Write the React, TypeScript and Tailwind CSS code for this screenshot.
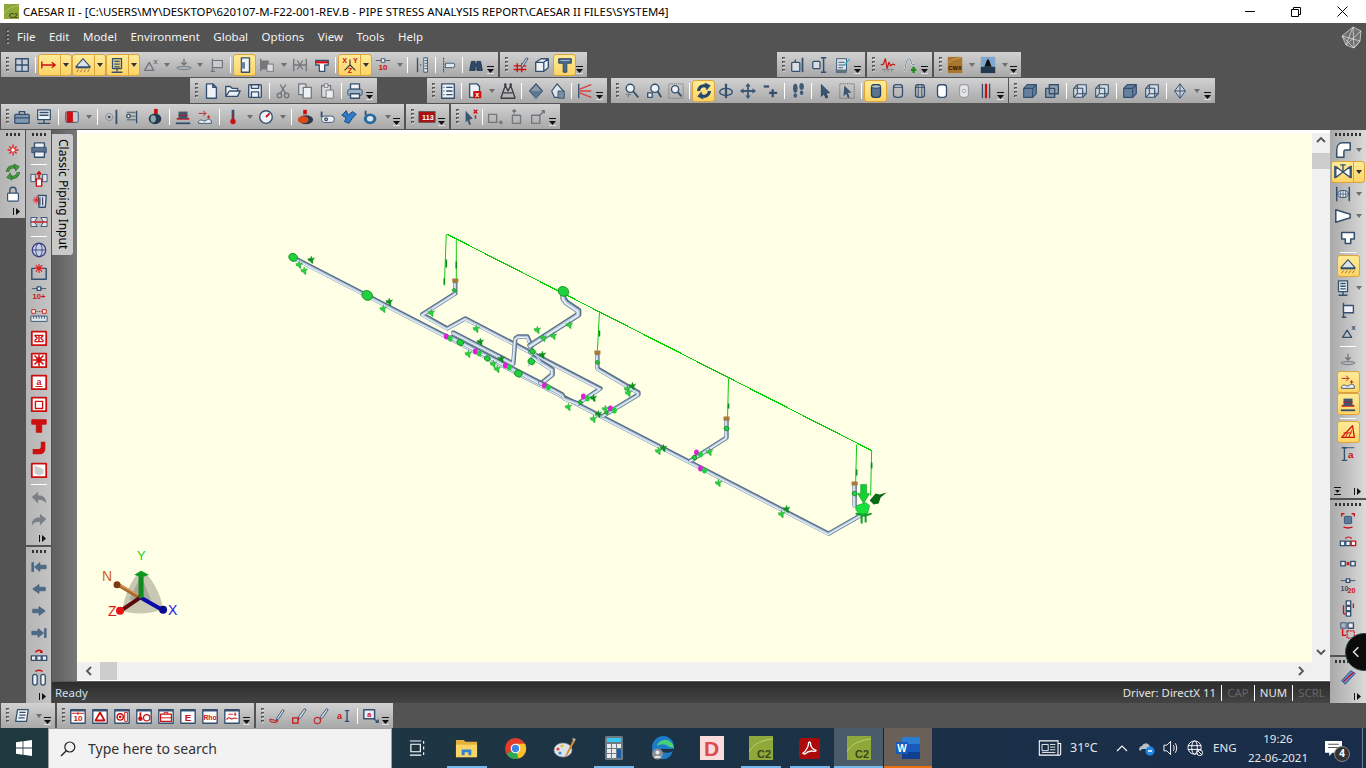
import type { ReactNode } from "react"

const D = "#34506e"
const R = "#cc1010"
const G = "#72777d"
const L = { fill: "none", stroke: D, strokeWidth: 1.5 }
const RL = { fill: "none", stroke: R, strokeWidth: 1.5 }
const GL = { fill: "none", stroke: G, strokeWidth: 1.5 }
const W = { fill: "#eef2f6", stroke: D, strokeWidth: 1.5 }
const RB = { fill: "#fff", stroke: R, strokeWidth: 2 }

const redBox = (inner: ReactNode) => (
  <>
    <rect x="2" y="3" width="16" height="15" {...RB} />
    {inner}
  </>
)
const blueBox = (inner: ReactNode) => (
  <>
    <rect x="2" y="3" width="16" height="15" fill="#fff" stroke={D} strokeWidth="1.5" />
    <path d="M2 4h16" stroke={D} strokeWidth="2" />
    {inner}
  </>
)
const label = (t: string, x: number, y: number, size: number, fill = R) => (
  <text x={x} y={y} fontSize={size} fontWeight="700" fill={fill} textAnchor="middle" fontFamily="Liberation Sans, sans-serif">
    {t}
  </text>
)
const cycle = (c: string, edge: string) => (
  <>
    <path d="M4 10a6 6 0 0 1 9-5" fill="none" stroke={edge} strokeWidth="3.4" />
    <path d="M16 10a6 6 0 0 1-9 5" fill="none" stroke={edge} strokeWidth="3.4" />
    <path d="M4 10a6 6 0 0 1 9-5" fill="none" stroke={c} strokeWidth="2.2" />
    <path d="M16 10a6 6 0 0 1-9 5" fill="none" stroke={c} strokeWidth="2.2" />
    <path d="M11 1l6 3-4 5z" fill={c} stroke={edge} strokeWidth=".6" />
    <path d="M9 19l-6-3 4-5z" fill={c} stroke={edge} strokeWidth=".6" />
  </>
)

const ICONS: Record<string, ReactNode> = {
  grid: <><rect x="3" y="3" width="14" height="14" fill="#c5cdd6" stroke={D} strokeWidth="1.5" /><path d="M10 3v14M3 10h14" {...L} /></>,
  beam: <path d="M2 6v8M2 10h15M13 7l4 3-4 3" {...RL} />,
  support: <><path d="M10 3l8 9H2z" fill="#dde3e8" stroke={D} strokeWidth="1.2" /><path d="M2 13h16" stroke={D} strokeWidth="1.5" /><path d="M3 18l2-3M7 18l2-3M11 18l2-3M15 18l2-3" stroke="#a06020" /></>,
  hanger: <><rect x="5" y="3" width="10" height="11" fill="#e4cf80" stroke={D} strokeWidth="1.4" /><path d="M7 6h6M7 9h6M7 12h6M10 14v3M4 18h12" {...L} /></>,
  dx: <><path d="M3 16l5-9 5 9z" {...GL} />{label("x", 15, 9, 9, G)}</>,
  nozzle: <><path d="M2 13c3-2 13-2 16 0-3 3-13 3-16 0z" fill="#aeb6bd" stroke={G} /><path d="M10 3v7M7 7l3 3 3-3" {...GL} /></>,
  flag: <><path d="M5 3v14M3 17h5" {...GL} /><rect x="5" y="5" width="11" height="8" fill="#c8ccd0" stroke={G} strokeWidth="1.3" /></>,
  node: <><rect x="6" y="2" width="9" height="16" fill="#eef2f6" stroke={D} strokeWidth="1.5" /><rect x="6" y="7" width="4" height="7" fill="#5f7fa6" /></>,
  flagdoc: <><path d="M3 3v14" {...GL} /><rect x="3" y="5" width="9" height="10" fill="#777" /><rect x="10" y="9" width="7" height="8" fill="#ddd" stroke={G} /></>,
  exp: <><path d="M3 3v14M17 3v14M3 10h14" {...GL} /><path d="M7 5l3 5-3 5M13 5l-3 5 3 5" {...GL} /></>,
  tee: <><path d="M3 5h14v5h-4v7H7v-7H3z" fill="#fff" stroke={D} strokeWidth="1.4" /><path d="M3 7h14" stroke={R} strokeWidth="2.5" /></>,
  xyz: <><path d="M10 10V4M10 10l-6 6M10 10l6 6" fill="none" stroke="#333" strokeWidth="1.2" />{label("X", 4, 8, 8)}{label("Y", 16, 8, 8)}{label("Z", 10, 19, 8)}</>,
  ten: <><path d="M2 5h16" stroke="#555" /><rect x="8" y="3" width="4" height="4" fill="#eef2f6" stroke={D} />{label("10", 10, 16, 9)}</>,
  rod: <><path d="M5 2v16M15 2v16" {...L} /><rect x="12" y="2" width="4" height="16" fill="#eef2f6" stroke={D} /><path d="M13 5h3M13 8h3M13 11h3M13 14h3" stroke={D} /><path d="M8 10h1" {...L} /></>,
  dash: <><path d="M4 2v16" stroke={D} strokeWidth="1.3" strokeDasharray="2 1" /><path d="M6 8h8a2 2 0 0 1 0 5H6z" fill="#dfe6ec" stroke={D} /></>,
  binoc: <path d="M3 16l2-10h4v3h2V6h4l2 10h-6v-4H9v4z" fill="#2e4a68" stroke="#1e3550" />,
  hash: <><path d="M3 11h14M3 15h14M7 8v10M12 8v10" {...RL} /><path d="M11 11l6-9 2 1-6 9z" fill="#cfd6dc" stroke={D} /></>,
  box: <path d="M3 7l6-4h8v10l-5 4H3zM3 7h9v10M12 7l5-4" fill="#eef2f6" stroke={D} strokeWidth="1.5" />,
  hammer: <><path d="M3 3h14v5h-5v10H8V8H3z" fill="#4d6d8e" stroke="#24415e" /><path d="M5 5h10" stroke="#a8c0d8" /></>,
  doc: <path d="M5 2h7l4 4v12H5zM12 2v4h4" {...W} />,
  open: <path d="M2 16V5h5l2 2h6v3H6l-4 6h13l3-6H6" {...W} />,
  save: <><rect x="3" y="3" width="14" height="14" rx="1" {...W} /><path d="M6 3v4h8V3M6 17v-6h8v6" {...L} /></>,
  cut: <><circle cx="6" cy="15" r="2.5" {...GL} /><circle cx="14" cy="15" r="2.5" {...GL} /><path d="M7 13l6-10M13 13L7 3" {...GL} /></>,
  copy: <><path d="M3 2h8v12H3z" fill="#dde3e8" stroke={G} strokeWidth="1.4" /><path d="M8 6h9v12H8z" fill="#eef2f6" stroke={G} strokeWidth="1.4" /></>,
  paste: <><rect x="4" y="4" width="10" height="13" fill="#d8dcdf" stroke={G} strokeWidth="1.4" /><rect x="7" y="2" width="4" height="4" fill="#eee" stroke={G} /><rect x="9" y="9" width="8" height="9" fill="#eee" stroke={G} /></>,
  print: <><rect x="5" y="2" width="10" height="6" {...W} /><rect x="2" y="8" width="16" height="7" rx="2" fill="#9fb3c6" stroke={D} /><rect x="5" y="13" width="10" height="5" {...W} /></>,
  list: <><rect x="3" y="2" width="14" height="16" {...W} /><path d="M8 6h7M8 10h7M8 14h7M5 6h1M5 10h1M5 14h1" {...L} /></>,
  docx: <><path d="M4 2h8l3 3v12H4z" {...W} /><rect x="8" y="10" width="9" height="8" rx="1" fill={R} />{label("x", 12.5, 17, 8, "#fff")}</>,
  walk: <><path d="M2 18L7 4l3 6 3-6 5 14M5 12h10M2 18h16" fill="none" stroke="#3a3f46" strokeWidth="1.5" /><circle cx="7" cy="3" r="1.5" fill="#3a3f46" /><circle cx="13" cy="3" r="1.5" fill="#3a3f46" /></>,
  bucket: <><path d="M10 2l7 8-7 8-7-8z" fill="#8e9aa6" stroke={D} strokeWidth="1.3" /><path d="M3 10h14l-7 8z" fill="#5f7793" /></>,
  bucket2: <><path d="M9 2l7 8-3 7H6l-3-7z" fill="#dfe6ec" stroke={D} strokeWidth="1.3" /><rect x="10" y="10" width="7" height="8" fill="#7a8fa6" stroke={D} /></>,
  redlines: <><path d="M3 2v16" stroke={D} strokeWidth="1.5" /><path d="M4 8l13-5M4 10h13M4 12l13 5" stroke="#d94040" strokeWidth="1.6" /></>,
  zoom1: <><circle cx="8" cy="7" r="4.5" {...W} /><path d="M11 10l6 7" stroke={D} strokeWidth="2" /><path d="M3 14h6M6 11v6" stroke={G} /></>,
  zoom2: <><circle cx="11" cy="7" r="4.5" {...W} /><path d="M14 10l4 7" stroke={D} strokeWidth="2" /><rect x="3" y="12" width="5" height="5" {...W} /></>,
  zoom3: <><rect x="2" y="2" width="16" height="16" fill="none" stroke="#666" strokeDasharray="1 1" /><circle cx="9" cy="8" r="4" {...W} /><path d="M12 11l4 5" stroke={D} strokeWidth="2" /></>,
  rotate: cycle("#24476c", "#24476c"),
  orbit: <><path d="M10 2v16" stroke={D} strokeWidth="2.5" /><ellipse cx="10" cy="11" rx="7" ry="4" {...L} /></>,
  move: <path d="M10 1l3 4h-2v4h4V7l4 3-4 3v-2h-4v4h2l-3 4-3-4h2v-4H5v2l-4-3 4-3v2h4V5H7z" fill="#3b5877" />,
  fit: <><path d="M3 5h6" stroke={D} strokeWidth="2.5" /><path d="M13 8v9M9 12h9" stroke={D} strokeWidth="2.5" /></>,
  steps: <><ellipse cx="7" cy="7" rx="2.5" ry="5" fill="#3f5a78" /><ellipse cx="14" cy="5" rx="2.5" ry="4" fill="#3f5a78" /><ellipse cx="7" cy="15" rx="2" ry="2.5" fill="#3f5a78" /><ellipse cx="14" cy="12" rx="2" ry="2.5" fill="#3f5a78" /></>,
  arrow: <path d="M6 3l9 9-4 0 2 5-2 1-2-5-3 3z" fill="#3b5672" stroke="#28415c" />,
  arrowbox: <><rect x="2" y="2" width="16" height="16" fill="none" stroke="#555" strokeDasharray="1 1" /><path d="M7 4l8 8-4 0 2 5-2 1-2-5-3 3z" fill="#3b5672" /></>,
  cyl: <><rect x="5" y="3" width="10" height="14" rx="3" fill="#5a7590" stroke="#24415e" strokeWidth="1.5" /><ellipse cx="10" cy="5" rx="5" ry="2" fill="#aebdca" stroke="#24415e" /></>,
  cylw: <><rect x="5" y="3" width="10" height="14" rx="3" fill="none" stroke={D} strokeWidth="1.4" /><path d="M5 6h10" stroke={D} /></>,
  cylh: <><rect x="5" y="3" width="10" height="14" rx="3" fill="none" stroke={D} strokeWidth="1.4" /><path d="M8 3v14M12 3v14M5 6h10" stroke={D} /></>,
  cylf: <><rect x="5" y="3" width="10" height="14" rx="3" fill="#fff" stroke={D} strokeWidth="1.5" /></>,
  cylg: <><rect x="5" y="3" width="10" height="14" rx="3" fill="#e4e6e8" stroke="#9aa0a6" strokeWidth="1.4" /><circle cx="10" cy="10" r="2" fill="none" stroke="#aaa" /></>,
  cylr: <><path d="M6 2v16M14 2v16" stroke={D} strokeWidth="1.5" /><path d="M10 2v16" stroke="#cc1010" strokeWidth="2.5" /></>,
  cube1: <path d="M3 7h10v10H3zM3 7l4-4h10v10l-4 4M13 7l4-4" fill="#66819e" stroke={D} strokeWidth="1.3" />,
  cube2: <path d="M3 7h10v10H3zM7 3h10v10H7z" fill="#66819e" fillOpacity=".5" stroke={D} strokeWidth="1.5" />,
  cube3: <path d="M3 7h10v10H3zM3 7l4-4h10v10l-4 4M7 3v10h10M7 13l-4 4" fill="#d5dce3" stroke={D} strokeWidth="1.2" />,
  gem: <path d="M10 2l6 8-6 8-6-8zM4 10h12M10 2v16" fill="#cdd5dc" stroke={D} strokeWidth="1.1" />,
  brief: <><rect x="2" y="7" width="16" height="10" rx="1" fill="#7f98b0" stroke={D} strokeWidth="1.4" /><path d="M7 7V4h6v3M2 11h16" {...L} /></>,
  note: <><rect x="3" y="2" width="14" height="11" fill="#eef2f6" stroke={D} strokeWidth="1.4" /><path d="M5 5h10M5 8h10M3 17h14M10 13v4" {...L} /></>,
  redcyl: <><rect x="3" y="4" width="14" height="12" rx="2" fill="#c5ccd3" stroke={D} /><rect x="4" y="4" width="7" height="12" fill={R} /></>,
  target: <><path d="M16 2v16" stroke={D} strokeWidth="2" /><circle cx="8" cy="10" r="4" fill="none" stroke="#777" strokeDasharray="2 1" /><circle cx="8" cy="10" r="1.5" fill={D} /></>,
  spec: <><path d="M3 5h10M3 9h10M3 13h10" {...GL} /><path d="M14 3v14" {...L} /><circle cx="5" cy="9" r="2" {...W} /></>,
  tire: <><rect x="9" y="1" width="4" height="6" fill={R} /><ellipse cx="10" cy="12" rx="7" ry="6" fill="#24384e" /><ellipse cx="8" cy="12" rx="3" ry="4" fill="#8aa" /></>,
  redbeam: <><path d="M3 12h14" stroke={R} strokeWidth="2" /><path d="M5 4h10v8H5z" fill="#3e5872" /><path d="M5 8h10" stroke={R} /><path d="M2 17h16" stroke={D} strokeWidth="2" /></>,
  wave: <><path d="M3 15c3-4 5 1 8-1s3-2 6 0v3H3z" fill="#eef2f6" stroke={D} /><path d="M3 6h8M8 3l3 3-3 3M14 8v4M12 10h4" stroke="#b02020" fill="none" /></>,
  therm: <><path d="M10 2v11" stroke={D} strokeWidth="3" /><circle cx="10" cy="15" r="3" fill={R} /><path d="M10 6v8" stroke={R} /></>,
  gauge: <><circle cx="10" cy="10" r="7" fill="#eef2f6" stroke={D} strokeWidth="1.5" /><path d="M10 10l4-4" stroke={R} strokeWidth="2" /></>,
  fire: <><ellipse cx="11" cy="13" rx="8" ry="5" fill="#2b3b4c" /><ellipse cx="8" cy="13" rx="6" ry="4" fill="#d94a1a" /><path d="M8 2h4v5H8z" fill={R} /></>,
  pipes: <><rect x="4" y="9" width="14" height="7" rx="3" fill="#eef2f6" stroke={D} /><circle cx="9" cy="12.5" r="1.5" {...L} /><path d="M4 4v6" stroke={D} strokeWidth="2" /></>,
  flash: <path d="M2 8l5-5 2 5 5-4 4 3-4 4-4 6-5-2 2-4z" fill="#2a7fd0" stroke="#1a3f6a" />,
  ring: <><ellipse cx="9" cy="12" rx="7" ry="6" fill="#2b6a9a" /><ellipse cx="9" cy="12" rx="3.5" ry="3" fill="#d8e4ee" /><path d="M4 3v5" stroke={D} strokeWidth="2" /></>,
  r113: <><rect x="1" y="4" width="18" height="12" fill="#b00e0e" stroke="#555" />{label("113", 11, 13, 8, "#fff")}</>,
  cursorx: <><path d="M4 3l8 9-4 1 2 5-2 1-2-5-2 2z" fill="#3b5672" /><path d="M13 2l4 4M17 2l-4 4M15 8v4" stroke={R} strokeWidth="1.5" /></>,
  ang1: <><path d="M4 7h9v9H4z" {...GL} /><path d="M15 16h4M17 14l2 2-2 2" {...GL} /></>,
  ang2: <><path d="M6 8h9v9H6z" {...GL} /><path d="M8 2v4M6 4l2-2 2 2" {...GL} /></>,
  ang3: <><path d="M3 8h9v9H3z" {...GL} /><path d="M12 8l5-5M14 3h3v3" {...GL} /></>,
  cwx: <><rect x="2" y="1" width="16" height="18" fill="#a8762c" /><path d="M3 8c4-5 8-5 14-6" stroke="#d6a860" fill="none" />{label("CWX", 10, 16, 6.5, "#1a1208")}</>,
  pump: <><rect x="2" y="1" width="16" height="18" fill="#7fa8d0" /><path d="M9 4h2l3 8H6z" fill="#111" /><rect x="2" y="12" width="16" height="7" fill="#22384e" /></>,
  cylrod: <><rect x="3" y="7" width="9" height="10" rx="1" fill="#d8dfe6" stroke={D} strokeWidth="1.4" /><path d="M15 2v16" stroke={D} strokeWidth="2" /><path d="M7 4v3" {...L} /></>,
  cylrod2: <><rect x="2" y="6" width="8" height="8" rx="1" fill="#d8dfe6" stroke={D} strokeWidth="1.4" /><path d="M14 2v16M11 2h6M11 18h6" stroke={D} strokeWidth="1.7" /></>,
  noteedit: <><path d="M4 3h11v14H4z" fill="#dde3e8" stroke={D} /><path d="M6 7h7M6 10h7M6 13h5" stroke={D} /><path d="M3 15h12v4H3z" fill="#62717f" /><path d="M12 10l6-7 1 1-6 7z" fill="#24b5c8" /></>,
  spectrum: <><path d="M2 10l3-1 2-6 2 11 2-7 2 4 2-2 3 1" fill="none" stroke={R} strokeWidth="1.3" /><path d="M3 15h14M6 14v4M10 14v4M14 14v4" stroke="#888" /></>,
  squig: <><path d="M3 17c3-1 1-13 6-14 4 0 0 9 7 6" fill="none" stroke="#eef2f6" strokeWidth="2" /><path d="M3 17c3-1 1-13 6-14 4 0 0 9 7 6" fill="none" stroke={D} strokeWidth=".8" /><path d="M14 12v7M11 15.5h6" stroke="#1c8a1c" strokeWidth="2.5" /></>,
  // vertical bars
  burst: <><path d="M10 4v12M4 10h12M6 6l8 8M14 6l-8 8" stroke="#e02020" strokeWidth="1.5" /><circle cx="10" cy="10" r="2" fill="#fff" /></>,
  refresh: cycle("#3f9a3f", "#1c5a1c"),
  lock: <><rect x="4" y="9" width="12" height="9" rx="1" fill="#fff" stroke={D} strokeWidth="1.3" /><path d="M6.5 9V6a3.5 3.5 0 0 1 7 0v3" fill="none" stroke={D} strokeWidth="1.5" /></>,
  docs: <><rect x="5" y="2" width="11" height="7" {...W} /><rect x="2" y="7" width="16" height="6" fill="#5b7590" stroke={D} /><rect x="5" y="12" width="11" height="6" {...W} /></>,
  valveUp: <><rect x="1" y="6" width="5" height="8" fill="#dfe6ec" stroke={D} /><rect x="14" y="6" width="5" height="8" fill="#dfe6ec" stroke={D} /><rect x="7" y="11" width="6" height="8" fill="#fff" stroke={R} strokeWidth="1.5" /><path d="M10 10V4M7.5 6L10 3l2.5 3" stroke={R} strokeWidth="1.7" fill="none" /></>,
  trash: <><path d="M9 5h9l-1 13h-7z" {...W} /><path d="M11 7v9M14 7v9" {...L} /><path d="M7 6v8M3 10h8M4 7l6 6M10 7l-6 6" stroke="#e02020" /></>,
  split: <><path d="M1 5h7l-3 5 3 5H1z" fill="#dfe6ec" stroke={D} /><path d="M19 5h-7l3 5-3 5h7z" fill="#dfe6ec" stroke={D} /><path d="M1 10h18" stroke={R} strokeWidth="1.5" /></>,
  globe: <><circle cx="10" cy="10" r="7.5" fill="#c5cfe0" stroke="#3c3f86" strokeWidth="1.4" /><ellipse cx="10" cy="10" rx="3.5" ry="7.5" fill="none" stroke="#3c3f86" /><path d="M2.5 10h15" stroke="#3c3f86" /></>,
  boxburst: <><rect x="2" y="6" width="16" height="12" fill="none" stroke={D} strokeWidth="1.6" /><path d="M10 1v10M5 6h10M6.5 2.5l7 7M13.5 2.5l-7 7" stroke="#e02020" strokeWidth="1.3" /></>,
  tenplus: <><path d="M2 4h16" stroke={D} /><rect x="8" y="2" width="4" height="4" {...W} />{label("10+", 10, 15, 8.5)}</>,
  ruler: <><rect x="2" y="3" width="4" height="4" fill="#fff" stroke={R} /><rect x="14" y="3" width="4" height="4" fill="#fff" stroke={R} /><path d="M6 5h8" stroke={R} strokeDasharray="1 1" /><rect x="1" y="10" width="18" height="6" fill="#dfe6ec" stroke={D} /><path d="M4 10v3M7 10v3M10 10v3M13 10v3M16 10v3" stroke={D} /></>,
  restr: redBox(<path d="M5 7h10M10 7v7M5 14h10M5 7l3 3-3 3M15 7l-3 3 3 3" stroke={R} strokeWidth="1.5" fill="none" />),
  disp: redBox(<><path d="M10 4v13M3 10h14M5 5l10 10M15 5L5 15" stroke={R} strokeWidth="1.7" /><circle cx="10" cy="10" r="3" fill={R} /></>),
  alpha: redBox(<>{label("a", 10, 13, 10)}<path d="M6 15h8" stroke={R} /></>),
  forceB: redBox(<rect x="6" y="7" width="8" height="8" fill="none" stroke={R} strokeWidth="1.5" />),
  redTee: <path d="M2 3h16v5h-5v9H7V8H2z" fill={R} stroke={R} />,
  redElbow: <path d="M12 3h5v8a6 6 0 0 1-6 6H3v-6h7a2 2 0 0 0 2-2z" fill={R} />,
  redRed: redBox(<path d="M5 5l10 4v5l-5 2-5-2z" fill="#ccc" />),
  undo: <path d="M2 9l7-6v4c6 0 9 3 9 9-2-3-5-4-9-4v4z" fill="#7b8086" />,
  redo: <path d="M18 9l-7-6v4c-6 0-9 3-9 9 2-3 5-4 9-4v4z" fill="#7b8086" />,
  first: <path d="M2 5v10h2V5zM5 10l6-5v3h7v4h-7v3z" fill="#4c6a8a" stroke={D} strokeWidth=".6" />,
  prev: <path d="M3 10l7-5v3h7v4h-7v3z" fill="#4c6a8a" stroke={D} strokeWidth=".6" />,
  next: <path d="M17 10l-7-5v3H3v4h7v3z" fill="#4c6a8a" stroke={D} strokeWidth=".6" />,
  last: <path d="M18 5v10h-2V5zM15 10L9 5v3H2v4h7v3z" fill="#4c6a8a" stroke={D} strokeWidth=".6" />,
  threeBox: <><rect x="1.5" y="11" width="5" height="5" {...W} /><rect x="7.5" y="11" width="5" height="5" {...W} /><rect x="13.5" y="11" width="5" height="5" {...W} /><path d="M6 7c2-3 6-3 8 0M14 7l-3 0" {...RL} /></>,
  twoCyl: <><rect x="3" y="7" width="5" height="12" rx="2.5" {...W} /><rect x="12" y="7" width="5" height="12" rx="2.5" {...W} /><path d="M6 4c2-2 6-2 8 0" {...RL} /></>,
  elbow: <path d="M9 2h9v8h-5c-1 0-2 1-2 2v6H3v-7c0-5 2-9 6-9z" fill="#fff" stroke={D} strokeWidth="1.7" />,
  valve: <><path d="M1 3v14M19 3v14" stroke={D} strokeWidth="1.7" /><path d="M2 4l8 6-8 6zM18 4l-8 6 8 6z" fill="#fff" stroke={D} strokeWidth="1.5" /><path d="M10 2v8M7 2h6" stroke={D} strokeWidth="1.5" /></>,
  expj: <><path d="M3 2v16M17 2v16" stroke={D} strokeWidth="1.7" /><ellipse cx="10" cy="10" rx="6" ry="4" fill="#e4eaf0" stroke={D} /><path d="M7 6v8M10 6v8M13 6v8M3 10h14" stroke={D} strokeWidth=".8" /></>,
  reducer: <path d="M2 3l16 5v4L2 17z" fill="#fff" stroke={D} strokeWidth="1.7" />,
  teeW: <path d="M3 4h14v7h-4v5H7v-5H3z" fill="#fff" stroke={D} strokeWidth="1.7" />,
  hangerW: <><rect x="5" y="2" width="10" height="12" {...W} /><path d="M7 5h6M7 8h6M7 11h6M10 14v4M5 18h10" {...L} /></>,
  flagW: <><path d="M5 2v16M3 18h5" {...L} /><rect x="5" y="5" width="11" height="8" {...W} /></>,
  dxW: <><path d="M4 16l5-8 5 8z" {...L} />{label("x", 16, 8, 9, D)}</>,
  aText: <><path d="M3 3h6M3 17h6M6 3v14" {...L} />{label("a", 13, 14, 11)}<path d="M9 3h8" stroke={D} /></>,
  lineSlant: <><path d="M3 16h14L15 3z" fill="none" stroke={R} strokeWidth="1.4" /><path d="M7 16l3-5M11 16l3-8M5 11h9" stroke={R} /></>,
  rotateNode: <><rect x="6" y="6" width="8" height="8" rx="1" fill="#5b7a9a" stroke={D} /><path d="M3 6V3h3M17 6V3h-3M5 18c3 1 7 1 10 0" {...RL} /></>,
  nodesRed: <><rect x="1.5" y="9" width="5" height="5" {...W} /><rect x="7.5" y="9" width="5" height="5" {...W} /><rect x="13.5" y="9" width="5" height="5" fill="#fff" stroke={R} strokeWidth="1.5" /><path d="M7 6c2-2 5-2 7 0" {...RL} /></>,
  nodesX: <><rect x="2" y="7" width="5" height="5" {...W} /><rect x="13" y="7" width="5" height="5" {...W} /><path d="M8.5 8l3 3M11.5 8l-3 3" {...RL} /></>,
  t1020: <><path d="M2 4h16" stroke={D} /><rect x="8" y="2" width="4" height="4" {...W} />{label("10", 6, 15, 8, D)}{label("20", 14, 18, 8)}</>,
  stack: <><rect x="8" y="2" width="5" height="5" {...W} /><rect x="8" y="8" width="5" height="5" {...W} /><rect x="8" y="14" width="5" height="5" {...W} /><path d="M5 7v9l2 1M16 5v5" {...RL} /></>,
  dashbox: <><rect x="2" y="2" width="6" height="6" fill="#a8b8ca" stroke={D} /><rect x="10" y="2" width="6" height="6" {...W} /><rect x="9" y="11" width="8" height="8" fill="none" stroke={R} strokeDasharray="2 1" strokeWidth="1.3" /><path d="M4 9v7h4" {...RL} /></>,
  cylblue: <><path d="M3 14L13 3l5 3L7 18z" fill="#5f8fd8" stroke="#274a80" /><path d="M5 15L16 5" stroke={R} strokeWidth="1.3" /></>,
  // bottom bar
  scroll: <><path d="M5 3h12l-2 13H3z" fill="#eef2f6" stroke={D} strokeWidth="1.4" /><path d="M7 6h7M7 9h7M6 12h7" {...L} /></>,
  bx10: blueBox(<>{label("10", 10, 15, 9)}<path d="M3 7h14M10 5v4" stroke={R} /></>),
  bxTri: blueBox(<path d="M5 15l5-9 5 9z" fill="none" stroke={R} strokeWidth="2" />),
  bxTarget: blueBox(<><circle cx="8" cy="11" r="3.5" fill="none" stroke={R} strokeWidth="1.5" /><circle cx="8" cy="11" r="1.5" fill={R} /><rect x="13" y="6" width="3" height="10" fill="none" stroke={R} /></>),
  bxTherm: blueBox(<><path d="M6 6v6" stroke={R} strokeWidth="2" /><circle cx="6" cy="13" r="2.5" fill={R} /><circle cx="13" cy="12" r="3.5" fill="none" stroke={R} strokeWidth="1.3" /></>),
  bxBrief: blueBox(<><rect x="4" y="8" width="12" height="8" fill="none" stroke={R} strokeWidth="1.3" /><path d="M8 8V6h4v2M4 12h12" stroke={R} fill="none" /></>),
  bxE: blueBox(label("E", 10, 15, 11)),
  bxRho: blueBox(label("Rho", 10, 14, 7.5)),
  bxWave: blueBox(<><path d="M4 14c3-5 5 1 7-1s3 0 5 0" {...RL} strokeWidth="1.2" /><path d="M6 8h5M12 8h3M13.5 6v4" stroke={R} /></>),
  pen1: <><path d="M10 12L16 3l2 1-6 9-3 2z" fill="#d8dfe6" stroke={D} /><path d="M2 14c0 4 8 4 9 1-3 1-6-2-9-1z" fill="none" stroke="#c23030" strokeWidth="1.3" /></>,
  pen2: <><path d="M10 10L16 2l2 1-6 9-3 2z" fill="#d8dfe6" stroke={D} /><rect x="3" y="12" width="6" height="6" fill="none" stroke={R} strokeWidth="1.4" /></>,
  pen3: <><path d="M10 10L16 2l2 1-6 9-3 2z" fill="#d8dfe6" stroke={D} /><circle cx="6" cy="15" r="3.5" fill="none" stroke="#c23030" strokeWidth="1.4" /></>,
  aBar: <>{label("a", 6, 13, 10)}<path d="M12 4h5M12 16h5M14.5 4v12" {...L} /></>,
  aArrow: <><rect x="2" y="3" width="12" height="10" fill="#e8eef4" stroke={D} strokeWidth="1.6" />{label("a", 8, 11, 8)}<path d="M13 13l5 4M18 14v3h-3" {...L} /></>,
}

type Item = string

function Icon({ name }: { name: string }) {
  return (
    <svg viewBox="0 0 20 20" className="w-[18px] h-[18px] shrink-0" strokeLinejoin="round">
      {ICONS[name]}
    </svg>
  )
}

function Caret({ on }: { on?: boolean }) {
  return (
    <span className={`w-0 h-0 border-x-[3px] border-x-transparent border-t-[4px] ${on ? "border-t-[#333]" : "border-t-[#6f6f6f]"}`} />
  )
}

// "name", "name!" = pressed, "name:d" = with drop arrow, "|" = separator
function ToolItem({ item, vertical }: { item: Item; vertical?: boolean }) {
  if (item === "|") {
    return vertical ? (
      <div className="h-[6px] w-full flex items-center justify-center">
        <div className="h-px w-[16px] bg-white" />
      </div>
    ) : (
      <div className="w-[6px] h-full flex items-center justify-center">
        <div className="w-px h-[16px] bg-white" />
      </div>
    )
  }
  const drop = item.endsWith(":d")
  const base = item.replace(":d", "")
  const on = base.endsWith("!")
  const name = base.replace("!", "")
  const onCls = on ? "rounded-[3px] border border-[#dca43a] bg-linear-to-b from-[#ffeb98] to-[#fdd465]" : ""
  return (
    <div className={`flex items-center shrink-0 h-[22px] ${onCls}`}>
      <div className={`flex items-center justify-center h-full ${on ? "w-[21px]" : "w-[22px]"}`}>
        <Icon name={name} />
      </div>
      {drop && (
        <div className={`flex items-center justify-center w-[11px] h-full ${on ? "border-l border-[#dca43a]" : ""}`}>
          <Caret on={on} />
        </div>
      )}
    </div>
  )
}

function GripV() {
  return (
    <svg viewBox="0 0 3 16" className="w-[3px] h-4 shrink-0">
      <path d="M0 1h3M0 5h3M0 9h3M0 13h3" stroke="#333" strokeWidth="1.6" strokeDasharray="3 0" />
      <path d="M1 2h2M1 6h2M1 10h2M1 14h2" stroke="#fff" strokeWidth=".8" />
    </svg>
  )
}

function ExpandH() {
  return (
    <svg viewBox="0 0 7 8" className="w-[7px] h-[8px] shrink-0">
      <path d="M0 .5h7" stroke="#111" />
      <path d="M0 3h7L3.5 7z" fill="#111" />
      <path d="M0 7.5h7" stroke="#fff" strokeWidth=".6" />
    </svg>
  )
}

function ExpandV() {
  return (
    <svg viewBox="0 0 8 7" className="w-[8px] h-[7px] shrink-0">
      <path d="M.5 0v7" stroke="#111" />
      <path d="M3 0v7l4-3.5z" fill="#111" />
    </svg>
  )
}

function HBar({ items, className, noExpand }: { items: Item[]; className: string; noExpand?: boolean }) {
  return (
    <div className={`h-[25px] flex items-center pl-[5px] bg-linear-to-b from-[#d2d2d2] to-[#a8a8a8] ${className}`}>
      <div className="w-[4px] mr-[1px]"><GripV /></div>
      {items.map((it, i) => (
        <ToolItem key={i} item={it} />
      ))}
      {!noExpand && (
        <div className="ml-auto mr-[4px] self-end mb-[3px]">
          <ExpandH />
        </div>
      )}
    </div>
  )
}

function VBar({ items, className, expand = true, wide, extra }: { items: Item[]; className: string; expand?: boolean; wide?: boolean; extra?: boolean }) {
  return (
    <div className={`flex flex-col items-center ${wide ? "bg-linear-to-r from-[#a9a9a9] to-[#dadada]" : "bg-linear-to-r from-[#b5b5b5] to-[#c4c4c4]"} ${className}`}>
      <div className="h-[9px] flex items-center justify-center shrink-0">
        <div className={`h-[3px] border-y border-transparent ${wide ? "w-[26px]" : "w-[14px]"} bg-[repeating-linear-gradient(90deg,#333_0,#333_2px,transparent_2px,transparent_4px)]`} />
      </div>
      {items.map((it, i) => (
        <ToolItem key={i} item={it} vertical />
      ))}
      {expand && (
        <div className={`mt-auto mb-[3px] w-full flex items-center px-[4px] ${extra ? "justify-between" : "justify-end"}`}>
          {extra && (
            <svg viewBox="0 0 7 8" className="w-[7px] h-[8px]">
              <path d="M0 .5h7M0 7.5h7" stroke="#111" />
              <path d="M1 3h5L3.5 6z" fill="#111" />
            </svg>
          )}
          <ExpandV />
        </div>
      )}
    </div>
  )
}

function Pipe({ d, w = 4.4 }: { d: string; w?: number }) {
  return (
    <g fill="none" strokeLinejoin="round" strokeLinecap="round">
      <path d={d} stroke="#5d7189" strokeWidth={w} />
      <path d={d} stroke="#b9cde0" strokeWidth={w * 0.6} transform="translate(-.4 .6)" />
      <path d={d} stroke="#f0f7fd" strokeWidth={w * 0.2} transform="translate(-.6 1)" />
    </g>
  )
}

function Rest({ x, y, dark }: { x: number; y: number; dark?: boolean }) {
  return (
    <path
      transform={`translate(${x} ${y}) scale(.85)`}
      d="M-4-1l3 0 1-3 1 3 3-1-2 3 0 4-2-1-1-2-2 0z"
      fill={dark ? "#0f8f22" : "#2bd13f"}
      stroke="#0a8a14"
      strokeWidth=".4"
    />
  )
}

function Blob({ x, y, r = 3.5, c = "#22cf3e" }: { x: number; y: number; r?: number; c?: string }) {
  return <ellipse cx={x} cy={y} rx={r} ry={r * 0.85} fill={c} stroke="#0b8a1c" strokeWidth=".8" transform={`rotate(30 ${x} ${y})`} />
}

const RESTS: [number, number, boolean?][] = [
  [299, 264], [311, 259, true], [304, 270], [383, 308], [389, 301, true], [431, 312], [476, 328], [480, 341, true], [468, 353],
  [493, 363], [497, 368], [501, 358, true], [543, 337], [553, 335], [537, 329], [569, 324], [542, 354, true], [568, 406], [593, 397, true],
  [627, 388], [632, 385, true], [593, 418], [598, 413, true], [658, 450], [663, 447, true], [709, 451], [718, 482], [781, 513], [786, 508, true], [605, 408], [628, 392],
]
const MAGENTA: [number, number][] = [
  [448, 337], [477, 352], [507, 366], [546, 386], [585, 397], [612, 409], [698, 453], [702, 469],
]
const BLOBS: [number, number, number][] = [
  [293, 257, 4.5], [367, 295, 5.5], [563, 291, 5.5], [460, 342, 3.5], [487, 358, 3], [518, 373, 4], [532, 351, 3], [531, 361, 3.5], [454, 290, 2], [597, 362, 2], [694, 457, 2.5], [726, 428, 2.5], [854, 493, 2.5], [580, 402, 2], [606, 412, 2],
]

function Model() {
  return (
    <svg viewBox="77 133 1234 528" className="w-full h-full block">
      {/* hanger rods */}
      <path d="M447 234L871 450" fill="none" stroke="#00d000" strokeWidth="1.2" shapeRendering="crispEdges" />
      <path d="M446 234L444 285M456 240V280M599 312L597 350M728 378L727 418M856 444L855 482M871 450L870 495" fill="none" stroke="#14c814" strokeWidth="1" />
      <path d="M446 259v8M444 278v6M456 261v7M599 330v6M728 403v5M856 469v6M871 462v6" stroke="#0a8a1a" strokeWidth="1.6" />
      {/* pipework */}
      <Pipe d="M455 283V293L422 314L447 328L465 318L600 388L582 400L578 403" />
      <Pipe d="M293 257L828 533L863 513" />
      <Pipe d="M453 332L513 363L515 338L518 336H527L531 345L530 352" />
      <Pipe d="M563 292V298L566 302L578 310V314L530 345" w={6} />
      <Pipe d="M452 337L541 383L552 374V369L533 357" w={5} />
      <Pipe d="M540 382L562 394L564 398L578 403" />
      <Pipe d="M597 355V368L638 392V394L603 415" />
      <Pipe d="M726 420V437L690 460" />
      <Pipe d="M854 484V505" />
      <path d="M532 352l-4 14M534 352l8 12" stroke="#b4c9de" strokeWidth="1.5" />
      {/* fittings */}
      <path d="M452 278h6v4h-6zM594 350h6v4h-6zM723 416h6v4h-6zM851 481h6v4h-6z" fill="#a8783a" />
      {MAGENTA.map(([x, y], i) => (
        <g key={i}>
          <ellipse cx={x - 2} cy={y - 1} rx="2.4" ry="3" fill="#e020d8" />
          <ellipse cx={x + 2} cy={y + 1} rx="2.4" ry="3" fill="#22cf3e" />
        </g>
      ))}
      {BLOBS.map(([x, y, r], i) => (
        <Blob key={i} x={x} y={y} r={r} />
      ))}
      {RESTS.map(([x, y, dark], i) => (
        <Rest key={i} x={x} y={y} dark={dark} />
      ))}
      {/* big valve */}
      <path d="M860 484h6v9h3l-6 10-6-10h3z" fill="#12d030" stroke="#0a8a1c" strokeWidth=".5" />
      <path d="M856 505l9-3 4 3-2 8-8 1-4-5z" fill="#18e03c" stroke="#0a8a1c" strokeWidth=".5" />
      <path d="M861 513v10M865 513v9M855 513l9 2 7-2" stroke="#0ea024" strokeWidth="2" fill="none" />
      <path d="M869 500l6-7 4 1 7-2-6 5-2 6-5 1z" fill="#0a6a16" />
      {/* orientation triad */}
      <path d="M141 570c12 6 20 26 22 38-14 6-30 6-41 2 3-16 9-32 19-40z" fill="#c9c9b3" />
      <path d="M141 575l10 24-10 0-12 0z" fill="#a7a79a" />
      <path d="M140 597L118 584" stroke="#a86a30" strokeWidth="4" />
      <path d="M138 594L120 584" stroke="#e8a060" strokeWidth="1.2" />
      <circle cx="117" cy="584" r="3.5" fill="#7a3c10" />
      <path d="M140 597L121 610" stroke="#5a0a0a" strokeWidth="4" />
      <circle cx="120" cy="610" r="4" fill="#e81414" />
      <path d="M141 597L162 609" stroke="#0a0aa8" strokeWidth="4" />
      <circle cx="163" cy="609" r="4" fill="#0a0a90" />
      <path d="M141 597V573" stroke="#0e8a1e" strokeWidth="5" />
      <path d="M136 574l5-3 6 3-5 2z" fill="#0e9a20" stroke="#0e9a20" strokeWidth="1.5" />
      <g fontSize="14" fontFamily="Liberation Sans, sans-serif">
        <text x="137" y="559" fill="#20d020" fontSize="13">Y</text>
        <text x="102" y="580" fill="#d06010">N</text>
        <text x="108" y="615" fill="#e01818">Z</text>
        <text x="168" y="614" fill="#1818e0">X</text>
      </g>
    </svg>
  )
}

function Chevron({ dir }: { dir: "u" | "d" | "l" | "r" }) {
  const d = { u: "M1 6l4-4 4 4", d: "M1 2l4 4 4-4", l: "M6 1L2 5l4 4", r: "M2 1l4 4-4 4" }[dir]
  return (
    <svg viewBox="0 0 10 10" className="w-[10px] h-[10px] shrink-0">
      <path d={d} fill="none" stroke="#555" strokeWidth="1.8" />
    </svg>
  )
}

function C2Logo({ size }: { size: "sm" | "lg" }) {
  return (
    <svg viewBox="0 0 24 24" className={size === "sm" ? "w-[15px] h-[15px]" : "w-[24px] h-[24px]"}>
      <rect width="24" height="24" fill="#8fa83a" />
      <path d="M0 16C4 8 13 4 24 3" fill="none" stroke="#c8d68a" strokeWidth=".8" />
      <text x="22" y="22" fontSize="11" fontWeight="700" fill="#3a4420" textAnchor="end" fontFamily="Liberation Sans, sans-serif">C2</text>
    </svg>
  )
}

function TaskBtn({ children, under, cls = "" }: { children: ReactNode; under?: string; cls?: string }) {
  return (
    <div className={`relative w-[49px] h-full flex items-center justify-center ${cls}`}>
      {children}
      {under && <div className={`absolute bottom-0 h-[2px] ${under}`} />}
    </div>
  )
}

const ROW1A = ["grid", "|", "beam!:d", "support!:d", "hanger!:d", "dx:d", "nozzle:d", "flag", "|", "node!", "flagdoc:d", "exp", "tee", "|", "xyz!:d", "ten:d", "|", "rod", "|", "dash", "|", "binoc"]
const ROW1B = ["hash", "box", "hammer!"]
const ROW1C = ["cylrod", "cylrod2", "noteedit"]
const ROW1D = ["spectrum", "squig"]
const ROW1E = ["cwx:d", "pump:d"]
const ROW2A = ["doc", "open", "save", "|", "cut", "copy", "paste", "|", "print"]
const ROW2B = ["list", "|", "docx:d", "walk", "|", "bucket", "bucket2", "|", "redlines"]
const ROW2C = ["zoom1", "zoom2", "zoom3", "|", "rotate!", "orbit", "move", "fit", "|", "steps", "|", "arrow", "arrowbox", "|", "cyl!", "cylw", "cylh", "cylf", "cylg", "cylr"]
const ROW2D = ["cube1", "cube2", "|", "cube3", "cube3", "|", "cube1", "cube3", "|", "gem:d"]
const ROW3A = ["brief", "note", "|", "redcyl:d", "|", "target", "spec", "tire", "|", "redbeam", "wave", "|", "therm:d", "gauge:d", "|", "fire", "pipes", "flash", "ring:d"]
const ROW3C = ["cursorx", "|", "ang1", "ang2", "ang3"]

const LEFT1 = ["burst", "refresh", "lock"]
const LEFT2 = ["docs", "|", "valveUp", "trash", "split", "|", "globe", "boxburst", "tenplus", "ruler", "restr", "disp", "alpha", "forceB", "redTee", "redElbow", "redRed", "|", "undo", "redo"]
const LEFT3 = ["first", "prev", "next", "last", "threeBox", "twoCyl"]
const RIGHT1 = ["elbow:d", "valve!:d", "expj:d", "reducer:d", "teeW", "|", "support!", "hangerW:d", "flagW", "dxW", "|", "nozzle", "wave!", "redbeam!", "|", "lineSlant!", "aText"]
const RIGHT2 = ["rotateNode", "nodesRed", "nodesX", "t1020", "stack", "dashbox"]
const BOT1 = ["scroll:d"]
const BOT2 = ["bx10", "bxTri", "bxTarget", "bxTherm", "bxBrief", "bxE", "bxRho", "bxWave"]
const BOT3 = ["pen1", "pen2", "pen3", "aBar", "|", "aArrow"]

export default function App() {
  return (
    <div className="relative w-[1366px] h-[768px] overflow-hidden flex flex-col bg-[#535353] font-['Noto_Sans',sans-serif] text-[12px]">
      {/* title bar */}
      <div className="h-[23px] shrink-0 bg-white flex items-center text-black">
        <div className="w-[23px] flex justify-center"><C2Logo size="sm" /></div>
        <span className="text-[11.4px] whitespace-nowrap">CAESAR II - [C:\USERS\MY\DESKTOP\620107-M-F22-001-REV.B - PIPE STRESS ANALYSIS REPORT\CAESAR II FILES\SYSTEM4]</span>
        <div className="ml-auto mr-px flex h-full">
          <div className="w-[46px] flex items-center justify-center"><div className="w-[10px] h-px bg-black" /></div>
          <div className="w-[46px] flex items-center justify-center">
            <svg viewBox="0 0 10 10" className="w-[10px] h-[10px]"><path d="M2.5 2V.5h7v7H8M.5 2.5h7v7h-7z" fill="none" stroke="#000" /></svg>
          </div>
          <div className="w-[46px] flex items-center justify-center">
            <svg viewBox="0 0 11 11" className="w-[11px] h-[11px]"><path d="M.5.5l10 10M10.5.5l-10 10" stroke="#000" /></svg>
          </div>
        </div>
      </div>
      {/* menu */}
      <div className="h-[29px] shrink-0 flex items-center text-[#f2f2f2] text-[11.5px] pl-[6px] pb-[2px]">
        <div className="w-[3px] mr-[8px]"><GripV /></div>
        <div className="flex gap-[13.5px]">
          {["File", "Edit", "Model", "Environment", "Global", "Options", "View", "Tools", "Help"].map((m) => (
            <span key={m}>{m}</span>
          ))}
        </div>
        <div className="ml-auto mr-[3px]">
          <svg viewBox="0 0 24 24" className="w-[24px] h-[24px]">
            <path d="M3 11L14 2l8 4-1 10-6 7-8-3zM14 2l1 21M3 11l18 5M22 6L7 20M14 2L7 20M3 11l12 12M21 16L15 23" fill="#c8c8c8" fillOpacity=".25" stroke="#e4e4e4" strokeWidth=".7" />
          </svg>
        </div>
      </div>
      {/* toolbars */}
      <div className="h-[78px] shrink-0 flex flex-col gap-px">
        <div className="flex h-[25px]">
          <HBar items={ROW1A} className="ml-px w-[497px]" />
          <HBar items={ROW1B} className="ml-[2px] w-[87px]" />
          <HBar items={ROW1C} className="ml-[190px] w-[88px]" />
          <HBar items={ROW1D} className="ml-[2px] w-[65px]" />
          <HBar items={ROW1E} className="ml-[2px] w-[87px]" />
        </div>
        <div className="flex h-[25px]">
          <HBar items={ROW2A} className="ml-[190px] w-[187px]" />
          <HBar items={ROW2B} className="ml-[50px] w-[180px]" />
          <HBar items={ROW2C} className="ml-[4px] w-[397px]" />
          <HBar items={ROW2D} className="ml-px w-[206px]" />
        </div>
        <div className="flex h-[25px]">
          <HBar items={ROW3A} className="ml-px w-[403px]" />
          <HBar items={["r113"]} className="ml-[2px] w-[43px]" />
          <HBar items={ROW3C} className="ml-[2px] w-[109px]" />
        </div>
      </div>
      {/* work area */}
      <div className="h-[573px] shrink-0 flex">
        <div className="w-[26px] shrink-0">
          <VBar items={LEFT1} className="w-[25px] h-[88px]" />
        </div>
        <div className="w-[25px] mr-[1px] shrink-0 flex flex-col">
          <VBar items={LEFT2} className="w-[25px] h-[415px]" />
          <div className="h-[2px]" />
          <VBar items={LEFT3} className="w-[25px] flex-1" />
        </div>
        <div className="w-[1278px] flex flex-col">
          <div className="flex-1 flex min-h-0">
            <div className="w-[25px] shrink-0 bg-linear-to-r from-[#5f5f5f] to-[#787878] pt-[4px]">
              <div className="w-[21px] h-[121px] bg-[#c9c9c9] rounded-r-[3px] flex items-center justify-center">
                <span className="[writing-mode:vertical-rl] whitespace-nowrap text-[12px] text-black">Classic Piping Input</span>
              </div>
            </div>
            <div className="flex-1 flex flex-col bg-white pt-[3px] pl-0">
              <div className="flex-1 flex min-h-0">
                <div className="flex-1 min-w-0 bg-[#ffffe6]">
                  <Model />
                </div>
                <div className="w-[18px] shrink-0 bg-[#f0f0f0] flex flex-col items-center">
                  <div className="h-[16px] flex items-center"><Chevron dir="u" /></div>
                  <div className="w-full h-[16px] mt-[4px] bg-[#cdcdcd]" />
                  <div className="mt-auto h-[18px] flex items-center"><Chevron dir="d" /></div>
                </div>
              </div>
              <div className="h-[18px] shrink-0 bg-[#f0f0f0] flex items-center mb-[1px]">
                <div className="w-[23px] flex justify-end pr-[5px]"><Chevron dir="l" /></div>
                <div className="w-[17px] h-full bg-[#cdcdcd]" />
                <div className="ml-auto mr-[23px]"><Chevron dir="r" /></div>
              </div>
            </div>
          </div>
          <div className="h-[22px] shrink-0 bg-linear-to-b from-[#2c2c2c] to-[#444444] border-t border-t-[#5a5a5a] flex items-center pl-[3px] text-[11.4px] text-[#cfe0ee]">
            <span>Ready</span>
            <div className="ml-auto flex items-center h-full">
              <span className="mr-[5px] text-[#e4e4e4]">Driver: DirectX 11</span>
              <div className="w-px h-[16px] bg-white" />
              <span className="w-[32px] text-center text-[#666666]">CAP</span>
              <div className="w-px h-[16px] bg-white" />
              <span className="w-[37px] text-center text-[#e4e4e4]">NUM</span>
              <div className="w-px h-[16px] bg-white" />
              <span className="w-[37px] text-center text-[#666666]">SCRL</span>
            </div>
          </div>
        </div>
        <div className="w-[36px] mr-0 shrink-0 flex flex-col">
          <VBar items={RIGHT1} className="w-full h-[368px]" wide extra />
          <div className="h-[2px]" />
          <VBar items={RIGHT2} className="w-full h-[155px]" wide expand={false} />
          <div className="h-[2px]" />
          <VBar items={["cylblue"]} className="w-full flex-1" wide />
        </div>
      </div>
      {/* bottom toolbars */}
      <div className="h-[25px] shrink-0 flex">
        <HBar items={BOT1} className="ml-px w-[54px]" />
        <HBar items={BOT2} className="ml-[2px] w-[197px]" />
        <HBar items={BOT3} className="ml-[2px] w-[137px]" />
      </div>
      {/* taskbar */}
      <div className="h-[40px] shrink-0 flex items-center bg-linear-to-r from-[#20393f] to-[#192c4a] text-white">
        <div className="w-[48px] flex justify-center">
          <svg viewBox="0 0 16 16" className="w-[16px] h-[16px]"><path d="M0 2.2l6.6-.9v6.3H0zM7.4 1.2L16 0v7.6H7.4zM0 8.4h6.6v6.3L0 13.8zM7.4 8.4H16V16l-8.6-1.2z" fill="#fff" /></svg>
        </div>
        <div className="w-[344px] h-full bg-[#f2f2f2] flex items-center border border-[#a0a0a0] border-b-0 text-[#333333]">
          <svg viewBox="0 0 16 16" className="w-[16px] h-[16px] ml-[11px] mr-[12px]"><circle cx="9.8" cy="6" r="5" fill="none" stroke="#222" strokeWidth="1.2" /><path d="M6.3 9.7L1 15" stroke="#222" strokeWidth="1.4" /></svg>
          <span className="text-[14px]">Type here to search</span>
        </div>
        <div className="h-full flex ml-px">
          <TaskBtn>
            <svg viewBox="0 0 18 18" className="w-[17px] h-[17px]"><path d="M1 1h12M1 16h12M2 4.5h10v8H2z M15.5 1v3M15.5 7v3M15.5 13v3" fill="none" stroke="#fff" strokeWidth="1.2" /></svg>
          </TaskBtn>
          <TaskBtn under="w-[40px] bg-[#76b9ed]">
            <svg viewBox="0 0 24 24" className="w-[23px] h-[23px]"><path d="M1 3h8l2 2h12v16H1z" fill="#e6b13a" /><path d="M1 8h22v13H1z" fill="#f8d567" /><path d="M7 13h10v6h-3v-3h-4v3H7z" fill="#2c84d2" /></svg>
          </TaskBtn>
          <TaskBtn>
            <svg viewBox="0 0 24 24" className="w-[23px] h-[23px]"><circle cx="12" cy="12" r="11" fill="#e33b2e" /><path d="M12 12L2.5 17.5A11 11 0 0 0 12 23c1 0 2 0 3-.5z" fill="#2fa84f" /><path d="M12 7h10a11 11 0 0 1-7 15.5L12 12z" fill="#fbc02d" /><circle cx="12" cy="12" r="5" fill="#fff" /><circle cx="12" cy="12" r="3.8" fill="#3f83e8" /></svg>
          </TaskBtn>
          <TaskBtn>
            <svg viewBox="0 0 24 24" className="w-[24px] h-[24px]"><ellipse cx="10" cy="14" rx="9" ry="7" fill="#dfe4ea" stroke="#8a98a6" strokeWidth=".6" /><circle cx="5" cy="13" r="1.6" fill="#d84a3a" /><circle cx="9" cy="10" r="1.6" fill="#e8c030" /><circle cx="7" cy="17" r="1.6" fill="#3a8ad8" /><path d="M11 22L20 4l2 1-7 13z" fill="#d88a30" /><path d="M19 2l4 1-2 3z" fill="#c8b890" /></svg>
          </TaskBtn>
          <TaskBtn under="w-[40px] bg-[#76b9ed]">
            <svg viewBox="0 0 18 24" className="w-[18px] h-[24px]"><rect width="18" height="24" rx="1.5" fill="#6e7a84" /><rect x="2" y="2" width="14" height="4" fill="#38c6ee" /><path d="M2 8h4v4H2zM7 8h4v4H7zM2 13h4v4H2zM7 13h4v4H7zM2 18h4v4H2zM7 18h4v4H7z" fill="#e8ecef" /><rect x="12" y="13" width="4" height="9" fill="#1a5ea8" /><rect x="12" y="8" width="4" height="4" fill="#e8ecef" /></svg>
          </TaskBtn>
          <TaskBtn>
            <svg viewBox="0 0 24 24" className="w-[24px] h-[24px]"><path d="M1 12C1 5 6 0 12 0s11 4 11 11v2H9c1 4 8 5 13 2-2 6-7 9-11 8C5 22 1 18 1 12z" fill="#1d7cc8" /><path d="M23 12C22 6 17 3 13 4 8 5 6 8 6 10c3-2 9-3 12 1z" fill="#45d17a" /><circle cx="6.5" cy="18" r="5.5" fill="#8a8f93" /><circle cx="6.5" cy="16.5" r="2" fill="#e6e6e6" /><path d="M3 22c0-3 7-3 7 0z" fill="#e6e6e6" /></svg>
          </TaskBtn>
          <TaskBtn>
            <div className="w-[24px] h-[24px] bg-[#fbdcdc] flex items-center justify-center">
              <span className="text-[21px] leading-none font-bold text-[#dd4a50] font-['Liberation_Sans',sans-serif]">D</span>
            </div>
          </TaskBtn>
          <TaskBtn under="w-[40px] bg-[#76b9ed]"><C2Logo size="lg" /></TaskBtn>
          <TaskBtn under="w-[40px] bg-[#76b9ed]">
            <div className="w-[21px] h-[21px] rounded-[3px] bg-[#ad0b0b] flex items-center justify-center">
              <svg viewBox="0 0 16 16" className="w-[15px] h-[15px]"><path d="M1 13c3-2 6-7 6-11 0-1 2-1 2 0 0 4 3 7 6 8 0 1-1 1-2 1-4-1-7 0-10 3z" fill="none" stroke="#fff" strokeWidth="1.4" /></svg>
            </div>
          </TaskBtn>
          <TaskBtn cls="bg-[#4a5c6a]" under="w-full bg-[#76b9ed]"><C2Logo size="lg" /></TaskBtn>
          <TaskBtn cls="bg-[#6a6058] border-l border-[#222222]" under="w-full bg-[#e8700f]">
            <svg viewBox="0 0 24 22" className="w-[24px] h-[22px]"><rect x="6" y="0" width="18" height="22" rx="1.5" fill="#2b7cd3" /><rect x="6" y="7" width="18" height="8" fill="#185abd" /><rect x="6" y="15" width="18" height="7" fill="#103f91" /><rect x="0" y="5" width="12" height="12" rx="1" fill="#185abd" /><text x="6" y="14.5" fontSize="10" fontWeight="700" fill="#fff" textAnchor="middle" fontFamily="Liberation Sans, sans-serif">W</text></svg>
          </TaskBtn>
        </div>
        {/* tray */}
        <div className="ml-auto h-full flex items-center text-[#e6e6e6]">
          <svg viewBox="0 0 26 18" className="w-[24px] h-[16px]"><path d="M1 1h21v16H1zM22 4h3v11a2 2 0 0 1-3 2" fill="none" stroke="#fff" strokeWidth="1.2" /><path d="M4 5h7v7H4zM13 5h6M13 8h6M13 11h6M4 14h15" fill="none" stroke="#fff" /></svg>
          <span className="ml-[8px] text-[12.5px] w-[32px]">31°C</span>
          <div className="w-[14px] ml-[14px]"><svg viewBox="0 0 12 7" className="w-[12px] h-[7px]"><path d="M1 6l5-5 5 5" fill="none" stroke="#fff" strokeWidth="1.1" /></svg></div>
          <svg viewBox="0 0 16 16" className="w-[16px] h-[16px] ml-[9px]"><path d="M1 11a3 3 0 0 1 2-5 4 4 0 0 1 7-1l3 4H3z" fill="#b8c0c8" /><circle cx="11" cy="11" r="4.5" fill="#1e88e5" /><path d="M9 11h4" stroke="#fff" strokeWidth="1.5" /></svg>
          <svg viewBox="0 0 18 16" className="w-[17px] h-[16px] ml-[8px]"><path d="M1 5h3l4-4v14l-4-4H1z M11 5c1 2 1 4 0 6M13 3c2 3 2 7 0 10" fill="none" stroke="#fff" strokeWidth="1" /></svg>
          <svg viewBox="0 0 18 18" className="w-[17px] h-[17px] ml-[7px]"><circle cx="8" cy="8" r="7" fill="none" stroke="#fff" /><ellipse cx="8" cy="8" rx="3" ry="7" fill="none" stroke="#fff" /><path d="M1 6h14M1 10h14" stroke="#fff" /><circle cx="13.5" cy="13.5" r="3" fill="#1b2d48" stroke="#fff" /><path d="M11.5 11.5l4 4" stroke="#fff" /></svg>
          <span className="ml-[9px] w-[24px] text-[11.5px]">ENG</span>
          <div className="w-[82px] flex flex-col items-center leading-[19px] text-[11.5px]">
            <span>19:26</span>
            <span>22-06-2021</span>
          </div>
          <div className="relative w-[28px] flex justify-center">
            <svg viewBox="0 0 16 16" className="w-[17px] h-[17px]"><path d="M0 1h16v11H7l-3 3v-3H0z" fill="#fff" /><path d="M3 4h10M3 7h10" stroke="#555" /></svg>
            <span className="absolute left-[15px] top-[6px] w-[16px] h-[16px] rounded-full bg-[#333] border border-[#888] text-[10px] font-bold flex items-center justify-center text-white">4</span>
          </div>
          <div className="w-px h-full ml-[15px] mr-[3px] bg-[#6d8094]" />
        </div>
      </div>
      {/* floating side-panel handle */}
      <div className="absolute left-[1345px] top-[633px] w-[38px] h-[38px] rounded-full bg-[#0b0b0b] border border-[#2e4a55] flex items-center pl-[6px]">
        <svg viewBox="0 0 10 14" className="w-[8px] h-[12px]"><path d="M8 1L2 7l6 6" fill="none" stroke="#d8d8d8" strokeWidth="2" /></svg>
      </div>
    </div>
  )
}
